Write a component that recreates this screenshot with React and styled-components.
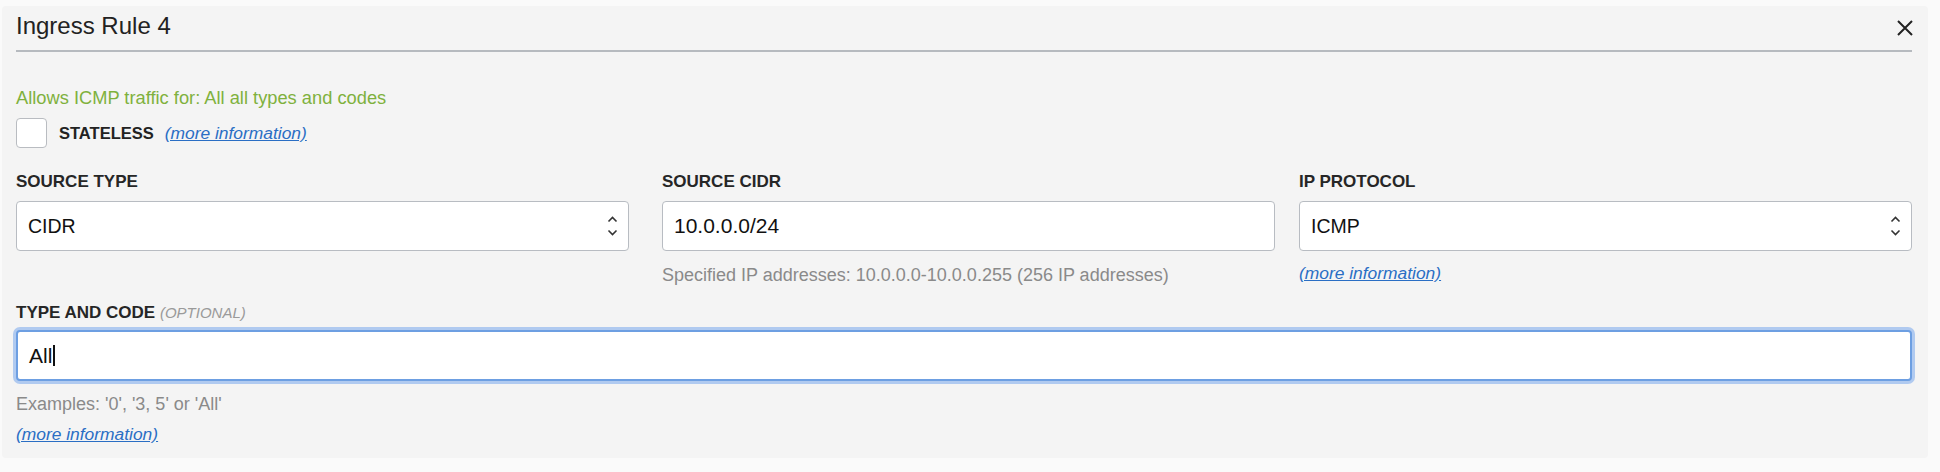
import React from 'react'
import styled, { createGlobalStyle } from 'styled-components'

const GlobalStyle = createGlobalStyle`
  html, body {
    margin: 0;
    padding: 0;
    background: #fafafa;
  }
  body {
    font-family: 'Liberation Sans', Arial, Helvetica, sans-serif;
    color: #222;
  }
`

const Panel = styled.div`
  margin: 6px 12px 15px 2px;
  background: #f4f4f4;
  border-radius: 4px;
  padding: 0 16px 12px 14px;
`

const Header = styled.div`
  height: 44px;
  display: flex;
  justify-content: space-between;
  align-items: flex-start;
  border-bottom: 2px solid #b6babf;
`

const Title = styled.h2`
  margin: 0;
  font-size: 24px;
  font-weight: normal;
  line-height: 40px;
  color: #222;
`

const CloseButton = styled.button`
  border: none;
  background: none;
  padding: 0;
  margin: 14px -1px 0 0;
  width: 16px;
  height: 16px;
  display: flex;
  cursor: pointer;
`

const Summary = styled.div`
  margin-top: 35px;
  font-size: 18.3px;
  line-height: 22px;
  color: #7fb13d;
`

const CheckRow = styled.div`
  margin-top: 9px;
  display: flex;
  align-items: center;
  gap: 11px;
`

const Checkbox = styled.span`
  box-sizing: border-box;
  width: 31px;
  height: 30px;
  background: #fff;
  border: 1.5px solid #b9bcc1;
  border-radius: 4px;
  margin-right: 1px;
`

const CheckLabel = styled.span`
  font-size: 16.5px;
  font-weight: bold;
  color: #222;
`

const MoreInfo = styled.a`
  font-size: 17.4px;
  font-style: italic;
  color: #2a6ec4;
  text-decoration: underline;
  line-height: 22px;
  cursor: pointer;
`

const FieldsRow = styled.div`
  margin-top: 24px;
  display: grid;
  grid-template-columns: 646px 637px 1fr;
`

const Field = styled.div`
  display: flex;
  flex-direction: column;
  align-items: flex-start;
  padding-right: ${p => p.$gap || 0}px;
`

const Label = styled.div`
  font-size: 17px;
  line-height: 20px;
  font-weight: bold;
  color: #262626;
  margin-bottom: ${p => p.$below || 9}px;
`

const Optional = styled.span`
  font-weight: normal;
  font-style: italic;
  font-size: 15px;
  color: #9a9a9a;
`

const Box = styled.div`
  box-sizing: border-box;
  width: 100%;
  height: ${p => p.$focused ? 51 : 50}px;
  background: #fff;
  border: ${p => p.$focused ? '2px solid #6d9fe2' : '1.5px solid #b8bcc2'};
  box-shadow: ${p => p.$focused ? '0 0 0 3px rgba(130, 174, 236, 0.6)' : 'none'};
  border-radius: 4px;
  display: flex;
  align-items: center;
  justify-content: space-between;
  padding: 0 10px 0 11px;
  font-size: ${p => p.$select ? 19.5 : 21}px;
  color: #111;
`

const Caret = styled.span`
  display: inline-block;
  width: 1.5px;
  height: 21px;
  background: #111;
  margin-left: 1px;
  vertical-align: -3px;
`

const Help = styled.div`
  margin-top: ${p => p.$top || 12}px;
  font-size: 18px;
  line-height: 22px;
  color: #8a8a8a;
`

const LinkLine = styled.div`
  margin-top: ${p => p.$top || 8}px;
  line-height: 22px;
`

const TypeCode = styled.div`
  margin-top: 17px;
`

function SelectArrows() {
  return (
    <svg width="11" height="22" viewBox="0 0 11 22">
      <path d="M1.5 6.5 L5.5 2.5 L9.5 6.5" fill="none" stroke="#333" strokeWidth="1.6" />
      <path d="M1.5 15.5 L5.5 19.5 L9.5 15.5" fill="none" stroke="#333" strokeWidth="1.6" />
    </svg>
  )
}

function CloseIcon() {
  return (
    <svg width="16" height="16" viewBox="0 0 16 16">
      <path d="M1 1 L15 15 M15 1 L1 15" stroke="#222" strokeWidth="2" />
    </svg>
  )
}

export default function App() {
  return (
    <>
      <GlobalStyle />
      <Panel>
        <Header>
          <Title>Ingress Rule 4</Title>
          <CloseButton aria-label="Close">
            <CloseIcon />
          </CloseButton>
        </Header>

        <Summary>Allows ICMP traffic for: All all types and codes</Summary>

        <CheckRow>
          <Checkbox />
          <CheckLabel>STATELESS</CheckLabel>
          <MoreInfo>(more information)</MoreInfo>
        </CheckRow>

        <FieldsRow>
          <Field $gap={33}>
            <Label>SOURCE TYPE</Label>
            <Box $select>
              CIDR
              <SelectArrows />
            </Box>
          </Field>
          <Field $gap={24}>
            <Label>SOURCE CIDR</Label>
            <Box>10.0.0.0/24</Box>
            <Help $top={13}>Specified IP addresses: 10.0.0.0-10.0.0.255 (256 IP addresses)</Help>
          </Field>
          <Field>
            <Label>IP PROTOCOL</Label>
            <Box $select>
              ICMP
              <SelectArrows />
            </Box>
            <LinkLine $top={11}>
              <MoreInfo>(more information)</MoreInfo>
            </LinkLine>
          </Field>
        </FieldsRow>

        <TypeCode>
          <Label $below={7}>
            TYPE AND CODE <Optional>(OPTIONAL)</Optional>
          </Label>
          <Box $focused>
            <span>
              All<Caret />
            </span>
          </Box>
          <Help $top={12}>Examples: '0', '3, 5' or 'All'</Help>
          <LinkLine $top={8}>
            <MoreInfo>(more information)</MoreInfo>
          </LinkLine>
        </TypeCode>
      </Panel>
    </>
  )
}
